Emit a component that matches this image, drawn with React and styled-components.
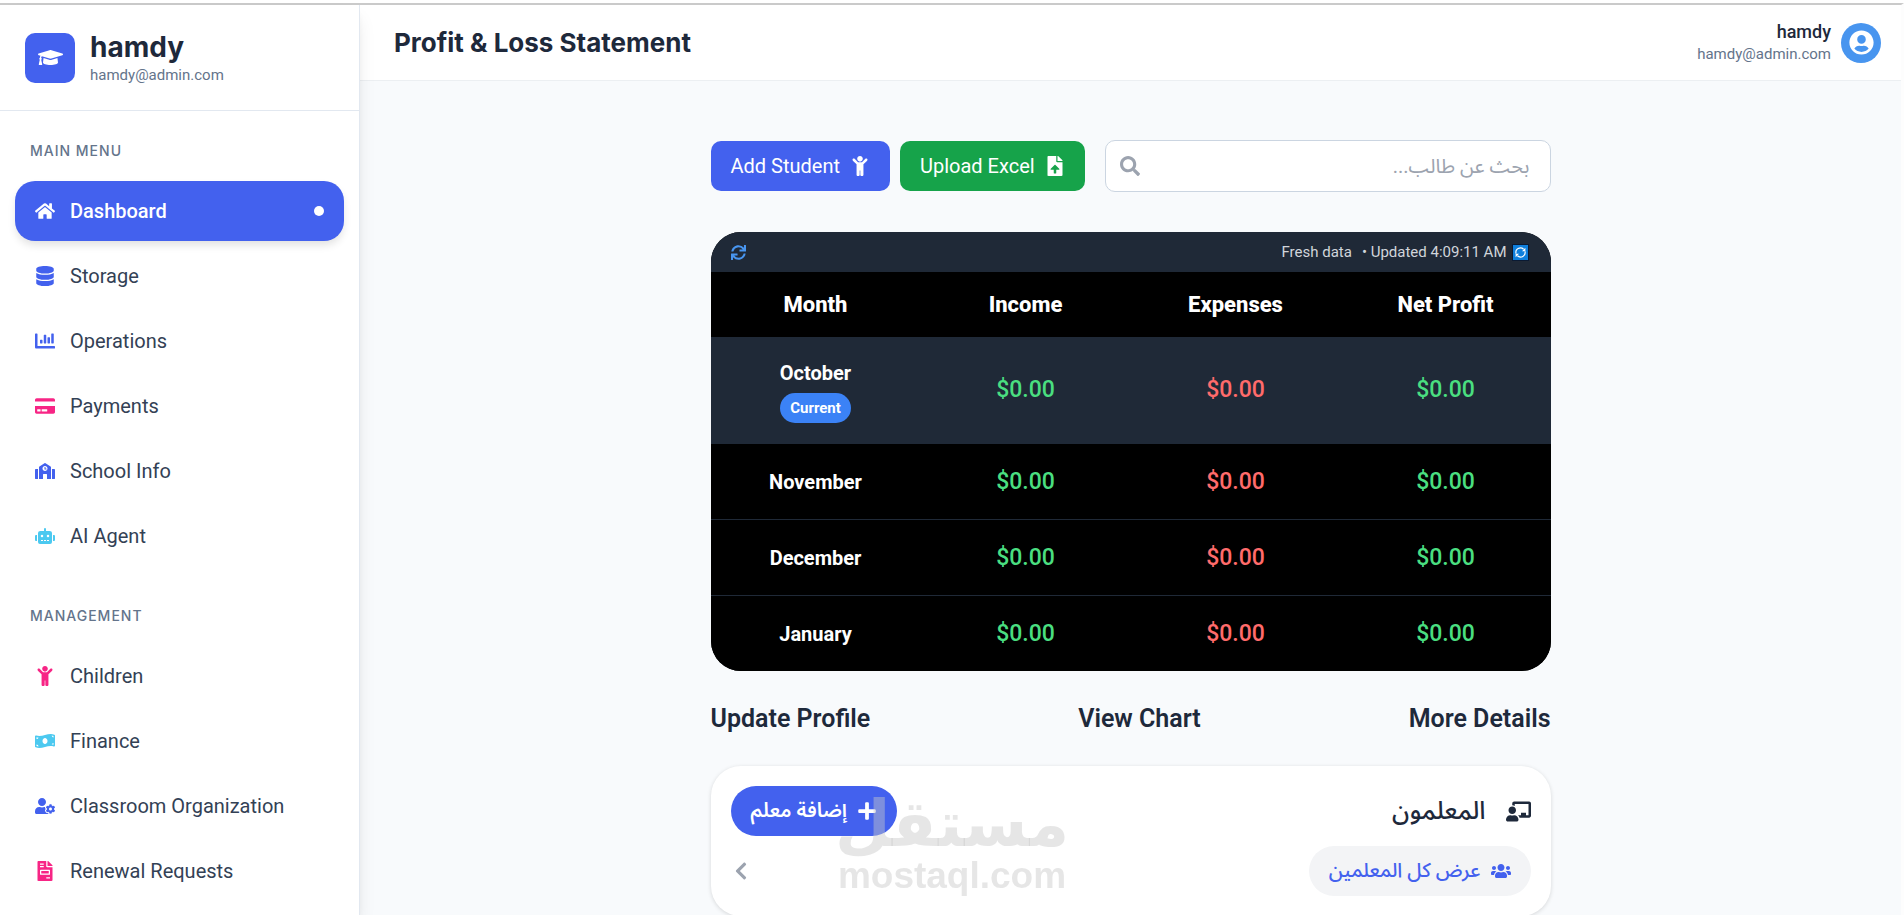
import React from "react";
import styled, { createGlobalStyle } from "styled-components";
import {
  FaGraduationCap, FaHome, FaDatabase, FaChartBar, FaCreditCard, FaSchool, FaRobot,
  FaChild, FaMoneyBillWave, FaUserCog, FaFileInvoice, FaUserCircle, FaFileUpload,
  FaSearch, FaSync, FaChalkboardTeacher, FaUsers, FaPlus, FaChevronLeft,
} from "react-icons/fa";

const blue = "#4361ee";
const pink = "#f72585";
const cyan = "#4cc9f0";
const ink = "#1e293b";
const muted = "#64748b";
const slate = "#1f2937";

const GlobalStyle = createGlobalStyle`
  * { box-sizing: border-box; }
  body {
    margin: 0;
    background: #fff;
    color: ${ink};
    font-family: Roboto, "Noto Sans Arabic", "DejaVu Sans", sans-serif;
    font-size: 20px;
  }
  button, input { font: inherit; }
  button { border: 0; cursor: pointer; }
  a { color: inherit; text-decoration: none; }
  svg { flex: none; display: block; }
`;

const Shell = styled.div`
  height: 100vh;
  padding-top: 3px;
  overflow: hidden;
`;

const Frame = styled.div`
  height: 100%;
  display: flex;
  border-top: 2px solid #cacaca;
  border-right: 3px solid #fdfdfd;
`;

const Sidebar = styled.aside`
  flex: 0 0 360px;
  background: #fff;
  border-right: 1px solid #e2e8f0;
  box-shadow: 0 12px 18px -3px rgba(0, 0, 0, 0.1), 0 5px 8px -4px rgba(0, 0, 0, 0.1);
  z-index: 1;
`;

const Brand = styled.div`
  display: flex;
  align-items: center;
  gap: 15px;
  height: 106px;
  padding: 0 25px;
  border-bottom: 1px solid #e2e8f0;
`;

const BrandIcon = styled.span`
  display: grid;
  place-items: center;
  width: 50px;
  height: 50px;
  border-radius: 10px;
  background: ${blue};
  color: #fff;
  font-size: 25px;
`;

const BrandName = styled.h2`
  margin: 0;
  font: 700 28px/34px Inter, sans-serif;
`;

const Email = styled.p`
  margin: 0;
  color: ${muted};
  font-size: 15px;
  line-height: 22px;
`;

const Nav = styled.nav`
  padding: 30px 15px;
`;

const Section = styled.section`
  & + & { margin-top: 40px; }
`;

const SectionTitle = styled.h3`
  margin: 0 0 20px 15px;
  color: ${muted};
  font: 500 14px/20px Inter, sans-serif;
  letter-spacing: 1px;
  text-transform: uppercase;
`;

const NavList = styled.ul`
  display: grid;
  gap: 5px;
  margin: 0;
  padding: 0;
  list-style: none;
`;

const NavItem = styled.a`
  display: flex;
  align-items: center;
  gap: 15px;
  height: 60px;
  padding: 0 20px;
  border-radius: 20px;
  color: ${(p) => (p.$active ? "#fff" : "#334155")};
  font-weight: ${(p) => (p.$active ? 500 : 400)};
  background: ${(p) => (p.$active ? blue : "transparent")};
  box-shadow: ${(p) => (p.$active ? "0 5px 8px -1px rgba(0, 0, 0, 0.12)" : "none")};
  svg { color: ${(p) => (p.$active ? "#fff" : p.$tint)}; }
`;

const Dot = styled.span`
  width: 10px;
  height: 10px;
  margin-left: auto;
  border-radius: 50%;
  background: #fff;
`;

const Page = styled.div`
  flex: 1;
  min-width: 0;
  background: #f8fafc;
`;

const Header = styled.header`
  display: flex;
  align-items: center;
  justify-content: space-between;
  height: 76px;
  padding: 0 20px 0 34px;
  background: #fff;
  border-bottom: 1px solid #eceff2;
`;

const PageTitle = styled.h1`
  margin: 0;
  font: 700 26px/36px Inter, sans-serif;
`;

const Account = styled.div`
  display: flex;
  align-items: center;
  gap: 10px;
  text-align: right;
`;

const AccountName = styled.p`
  margin: 0;
  font-size: 18px;
  font-weight: 500;
  line-height: 22px;
`;

const Avatar = styled.span`
  display: grid;
  place-items: center;
  width: 40px;
  height: 40px;
  border-radius: 50%;
  background: #4895ef;
  color: #fff;
  font-size: 25px;
`;

const Content = styled.main`
  max-width: 840px;
  margin: 0 auto;
  padding: 59px 0;
`;

const Toolbar = styled.div`
  display: flex;
  align-items: center;
  gap: 10px;
  margin-bottom: 40px;
`;

const ToolButton = styled.button`
  display: flex;
  align-items: center;
  gap: 10px;
  height: 50px;
  padding: 0 20px;
  border-radius: 10px;
  background: ${(p) => p.$fill};
  color: #fff;
  white-space: nowrap;
`;

const SearchBox = styled.label`
  display: flex;
  align-items: center;
  flex: 1;
  height: 52px;
  margin-left: 10px;
  padding: 0 20px 0 14px;
  border: 1px solid #cbd5e1;
  border-radius: 10px;
  background: #fff;
  color: #9ca3af;
`;

const SearchInput = styled.input`
  flex: 1;
  min-width: 0;
  padding: 0;
  border: 0;
  outline: 0;
  background: none;
  color: ${ink};
  &::placeholder { color: #9ca3af; opacity: 1; }
`;

const Report = styled.section`
  border-radius: 30px;
  overflow: hidden;
  background: #000;
  color: #fff;
`;

const ReportBar = styled.div`
  display: flex;
  align-items: center;
  height: 40px;
  padding: 0 22px 0 20px;
  background: ${slate};
  color: #d1d5db;
  font-size: 15px;
`;

const RefreshButton = styled.button`
  margin-right: auto;
  padding: 0;
  background: none;
  color: #4895ef;
`;

const Updated = styled.span`
  margin: 0 5px 0 10px;
`;

const Table = styled.table`
  width: 100%;
  table-layout: fixed;
  border-collapse: separate;
  border-spacing: 0;
  text-align: center;
`;

const HeadCell = styled.th`
  height: 65px;
  padding: 0;
  font-size: 22px;
  font-weight: 800;
`;

const Row = styled.tr`
  height: ${(p) => (p.$current ? 107 : 76)}px;
  background: ${(p) => (p.$current ? slate : "#000")};
  & > * { border-bottom: 1px solid ${slate}; }
  &:last-child { height: 75px; }
  &:last-child > * { border-bottom: 0; }
`;

const Month = styled.th`
  padding: 0;
  font-weight: 700;
  line-height: 30px;
`;

const Badge = styled.span`
  display: block;
  width: fit-content;
  margin: 5px auto 0;
  padding: 0 10px;
  border-radius: 15px;
  background: #3b82f6;
  font-size: 15px;
  line-height: 30px;
`;

const Amount = styled.td`
  padding: 0;
  color: ${(p) => (p.$loss ? "#ff6b6b" : "#4ade80")};
  font-size: 23px;
  font-weight: 500;
  line-height: 30px;
`;

const Shortcuts = styled.div`
  display: flex;
  justify-content: space-between;
  padding: 32px 0;
  font-size: 25px;
  font-weight: 600;
  line-height: 31px;
`;

const TeachersCard = styled.section`
  display: grid;
  gap: 10px;
  padding: 20px;
  border-radius: 30px;
  background: #fff;
  box-shadow: 0 1px 4px rgba(0, 0, 0, 0.14);
`;

const CardRow = styled.div`
  display: flex;
  align-items: center;
  justify-content: space-between;
  height: 50px;
`;

const CardTitle = styled.h2`
  display: flex;
  align-items: center;
  gap: 20px;
  margin: 0;
  font-size: 25px;
  font-weight: 500;
`;

const Pill = styled.button`
  display: flex;
  align-items: center;
  gap: 10px;
  height: 50px;
  padding: 0 20px;
  border-radius: 25px;
  background: ${(p) => (p.$primary ? blue : "#f3f4f6")};
  color: ${(p) => (p.$primary ? "#fff" : blue)};
  font-weight: ${(p) => (p.$primary ? 600 : 500)};
`;

const PageButton = styled.button`
  padding: 0;
  background: none;
  color: #9ca3af;
`;

const Watermark = styled.div`
  position: fixed;
  left: 50%;
  bottom: 20px;
  transform: translateX(-50%);
  z-index: 2;
  color: rgba(200, 200, 200, 0.45);
  text-align: center;
  font-weight: 700;
  pointer-events: none;
`;

const WatermarkName = styled.div`
  font-family: "DejaVu Sans", sans-serif;
  font-size: 64px;
  line-height: 66px;
`;

const WatermarkSite = styled.div`
  font-family: "Liberation Sans", sans-serif;
  font-size: 37px;
  line-height: 38px;
`;

const menus = [
  {
    title: "Main Menu",
    items: [
      ["Dashboard", FaHome, "#fff"],
      ["Storage", FaDatabase, blue],
      ["Operations", FaChartBar, blue],
      ["Payments", FaCreditCard, pink],
      ["School Info", FaSchool, blue],
      ["AI Agent", FaRobot, cyan],
    ],
  },
  {
    title: "Management",
    items: [
      ["Children", FaChild, pink],
      ["Finance", FaMoneyBillWave, cyan],
      ["Classroom Organization", FaUserCog, blue],
      ["Renewal Requests", FaFileInvoice, pink],
    ],
  },
];

const months = ["October", "November", "December", "January"];

function UpdateBadge() {
  return (
    <svg width="17" height="17" viewBox="0 0 17 17" aria-hidden="true">
      <rect width="17" height="17" fill="#0a1a33" />
      <rect x="1" y="1" width="15" height="15" fill="#0f7fdc" />
      <g fill="none" stroke="#fff" strokeWidth="1.2">
        <path d="M4 9.6A4.6 4.6 0 0 1 11.6 5.2" />
        <path d="M13 7.4A4.6 4.6 0 0 1 5.4 11.8" />
      </g>
      <path d="M13.4 3.8v3.4H10zM3.6 13.2V9.8H7z" fill="#fff" />
    </svg>
  );
}

export default function App() {
  return (
    <Shell>
      <GlobalStyle />
      <Frame>
        <Sidebar>
          <Brand>
            <BrandIcon><FaGraduationCap /></BrandIcon>
            <div>
              <BrandName>hamdy</BrandName>
              <Email>hamdy@admin.com</Email>
            </div>
          </Brand>
          <Nav>
            {menus.map((menu) => (
              <Section key={menu.title}>
                <SectionTitle>{menu.title}</SectionTitle>
                <NavList>
                  {menu.items.map(([label, Icon, tint]) => {
                    const active = label === "Dashboard";
                    return (
                      <li key={label}>
                        <NavItem href="#" $active={active} $tint={tint}>
                          <Icon />
                          {label}
                          {active && <Dot />}
                        </NavItem>
                      </li>
                    );
                  })}
                </NavList>
              </Section>
            ))}
          </Nav>
        </Sidebar>

        <Page>
          <Header>
            <PageTitle>Profit &amp; Loss Statement</PageTitle>
            <Account>
              <div>
                <AccountName>hamdy</AccountName>
                <Email>hamdy@admin.com</Email>
              </div>
              <Avatar><FaUserCircle /></Avatar>
            </Account>
          </Header>

          <Content>
            <Toolbar>
              <ToolButton $fill={blue}>Add Student <FaChild /></ToolButton>
              <ToolButton $fill="#16a34a">Upload Excel <FaFileUpload /></ToolButton>
              <SearchBox>
                <FaSearch />
                <SearchInput type="text" dir="rtl" placeholder="بحث عن طالب..." aria-label="بحث عن طالب" />
              </SearchBox>
            </Toolbar>

            <Report>
              <ReportBar>
                <RefreshButton aria-label="Refresh"><FaSync size={15} /></RefreshButton>
                <span>Fresh data</span>
                <Updated>• Updated 4:09:11 AM</Updated>
                <UpdateBadge />
              </ReportBar>
              <Table>
                <thead>
                  <tr>
                    <HeadCell scope="col">Month</HeadCell>
                    <HeadCell scope="col">Income</HeadCell>
                    <HeadCell scope="col">Expenses</HeadCell>
                    <HeadCell scope="col">Net Profit</HeadCell>
                  </tr>
                </thead>
                <tbody>
                  {months.map((month, i) => (
                    <Row key={month} $current={i === 0}>
                      <Month scope="row">
                        {month}
                        {i === 0 && <Badge>Current</Badge>}
                      </Month>
                      <Amount>$0.00</Amount>
                      <Amount $loss>$0.00</Amount>
                      <Amount>$0.00</Amount>
                    </Row>
                  ))}
                </tbody>
              </Table>
            </Report>

            <Shortcuts>
              <a href="#">Update Profile</a>
              <a href="#">View Chart</a>
              <a href="#">More Details</a>
            </Shortcuts>

            <TeachersCard dir="rtl" lang="ar">
              <CardRow>
                <CardTitle><FaChalkboardTeacher />المعلمون</CardTitle>
                <Pill $primary><FaPlus />إضافة معلم</Pill>
              </CardRow>
              <CardRow>
                <Pill><FaUsers />عرض كل المعلمين</Pill>
                <PageButton aria-label="التالي"><FaChevronLeft /></PageButton>
              </CardRow>
            </TeachersCard>
          </Content>
        </Page>
      </Frame>
      <Watermark>
        <WatermarkName lang="ar">مستقل</WatermarkName>
        <WatermarkSite>mostaql.com</WatermarkSite>
      </Watermark>
    </Shell>
  );
}
